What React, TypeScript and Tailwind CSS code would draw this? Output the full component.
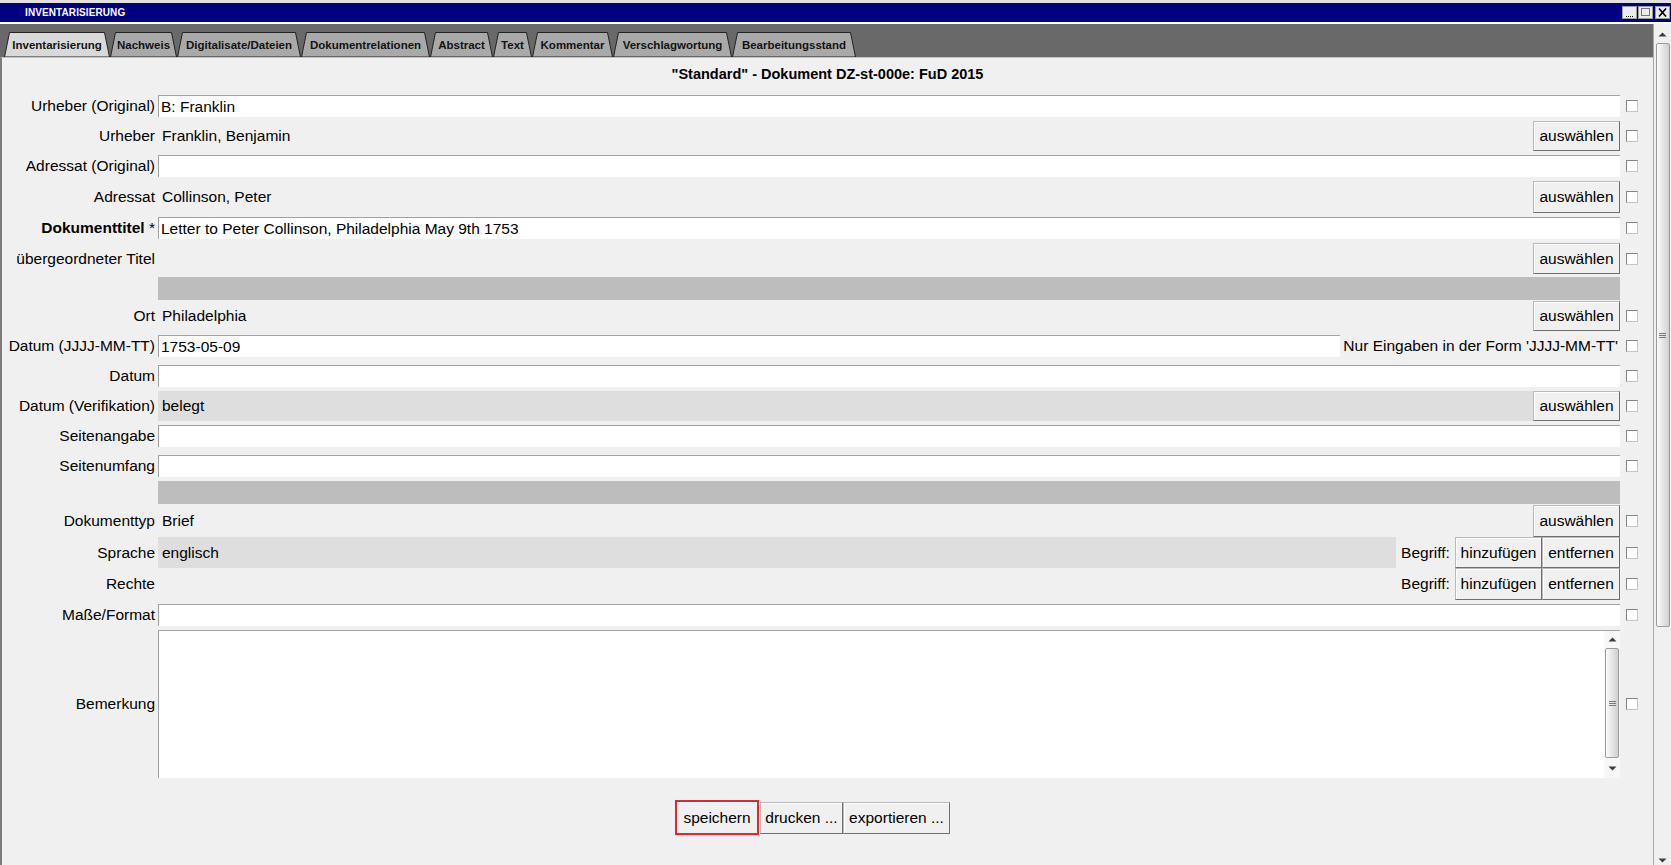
import React from 'react';

type Kids = { children?: React.ReactNode };

const Check = () => (
  <div className="w-[12px] h-[12px] bg-white border border-[#858585] border-r-[#c6c6c6] border-b-[#c6c6c6]" />
);

const Btn = ({ children, className = '' }: Kids & { className?: string }) => (
  <button
    type="button"
    className={`shrink-0 bg-[#f0f0f0] border border-[#b9b9b9] border-r-[#6f6f6f] border-b-[#6f6f6f] shadow-[inset_1px_1px_0_#ffffff] text-[15.5px] leading-none text-black flex items-center justify-center ${className}`}
  >
    {children}
  </button>
);

const Row = ({ label, children, h = 'h-[30px]' }: Kids & { label: React.ReactNode; h?: string }) => (
  <div className={`flex ${h}`}>
    <div className="w-[156px] shrink-0 flex items-center justify-end pr-[3px] whitespace-nowrap">{label}</div>
    <div className="flex-1 flex min-w-0">{children}</div>
    <div className="w-[33px] shrink-0 flex items-center pl-[6px]">
      <Check />
    </div>
  </div>
);

const Input = ({ value = '' }: { value?: string }) => (
  <div className="flex-1 h-[22px] mt-[4px] bg-white border-t border-l border-[#a3a3a3] pl-[2px] flex items-center whitespace-nowrap">
    {value}
  </div>
);

const Value = ({ text = '', shade = false }: { text?: string; shade?: boolean }) => (
  <div className={`flex-1 flex items-center pl-[4px] ${shade ? 'bg-[#dedede]' : ''}`}>{text}</div>
);

const Sep = ({ h, mt }: { h: string; mt: string }) => (
  <div className={`flex ${h}`}>
    <div className="w-[156px] shrink-0" />
    <div className={`flex-1 h-[23px] bg-[#bdbdbd] ${mt}`} />
    <div className="w-[33px] shrink-0" />
  </div>
);

const Up = () => (
  <svg width="9" height="5" viewBox="0 0 9 5">
    <path d="M0.5 4.5L4.5 0.5L8.5 4.5Z" fill="#3c3c3c" />
  </svg>
);
const Down = () => (
  <svg width="9" height="5" viewBox="0 0 9 5">
    <path d="M0.5 0.5L4.5 4.5L8.5 0.5Z" fill="#3c3c3c" />
  </svg>
);
const Grip = () => (
  <svg width="7" height="7" viewBox="0 0 7 7">
    <path d="M0 1.5h7M0 3.5h7M0 5.5h7" stroke="#7a7a7a" strokeWidth="1" />
  </svg>
);

const Thumb = ({ h }: { h: string }) => (
  <div className={`w-[14px] ${h} shrink-0 rounded-[2px] border border-[#9b9b9b] bg-gradient-to-r from-[#fbfbfb] via-[#e6e6e6] to-[#cfcfcf] flex items-center justify-center`}>
    <Grip />
  </div>
);

const tabs: { name: string; w: string; px: number; active?: boolean }[] = [
  { name: 'Inventarisierung', w: 'w-[106px]', px: 106, active: true },
  { name: 'Nachweis', w: 'w-[67px]', px: 67 },
  { name: 'Digitalisate/Dateien', w: 'w-[124px]', px: 124 },
  { name: 'Dokumentrelationen', w: 'w-[129px]', px: 129 },
  { name: 'Abstract', w: 'w-[63px]', px: 63 },
  { name: 'Text', w: 'w-[39px]', px: 39 },
  { name: 'Kommentar', w: 'w-[81px]', px: 81 },
  { name: 'Verschlagwortung', w: 'w-[119px]', px: 119 },
  { name: 'Bearbeitungsstand', w: 'w-[124px]', px: 124 },
];

export default function App() {
  return (
    <div className="w-[1671px] h-[865px] overflow-hidden flex flex-col bg-[#f0f0f0] font-['Liberation_Sans',Arial,sans-serif] text-black">
      <div className="h-[3px] bg-[#e2e2e2] shrink-0" />
      {/* title bar */}
      <div className="h-[19px] shrink-0 bg-[#000080] flex items-center">
        <span className="pl-[25px] text-[10px] font-bold text-white tracking-[0.1px]">INVENTARISIERUNG</span>
        <div className="ml-auto mr-[1px] flex items-center gap-[1px]">
          <div className="w-[15px] h-[13px] bg-[#ececec] border border-[#9a9a9a]">
            <svg width="13" height="11" viewBox="0 0 13 11">
              <path d="M3 9.5h7" stroke="#000" strokeDasharray="1 1" />
            </svg>
          </div>
          <div className="w-[15px] h-[13px] bg-[#ececec] border border-[#9a9a9a]">
            <svg width="13" height="11" viewBox="0 0 13 11">
              <rect x="2.5" y="1.5" width="8" height="7" fill="none" stroke="#000" strokeDasharray="1 1" />
            </svg>
          </div>
          <div className="w-[15px] h-[13px] ml-[1px] bg-[#ececec] border border-[#9a9a9a]">
            <svg width="13" height="11" viewBox="0 0 13 11">
              <path d="M3 1.5l7 8M10 1.5l-7 8" stroke="#000" strokeWidth="1.7" />
            </svg>
          </div>
        </div>
      </div>
      <div className="h-[2px] bg-white shrink-0" />

      <div className="flex-1 flex min-h-0">
        <div className="flex-1 flex flex-col min-w-0">
          {/* tabs */}
          <div className="h-[33px] shrink-0 bg-[#696969] flex items-end pl-[4px]">
            {tabs.map((t) => (
              <div key={t.name} className={`relative h-[25px] ${t.w} shrink-0 flex items-center justify-center`}>
                <svg className="absolute inset-0" width={t.px} height="25" viewBox={`0 0 ${t.px} 25`}>
                  <polygon
                    points={`0.5,25 5.5,0.5 ${t.px - 5.5},0.5 ${t.px - 0.5},25`}
                    fill={t.active ? '#d9d9d9' : '#a9a9a9'}
                    stroke="#222"
                    strokeWidth="1"
                  />
                </svg>
                <span className="relative text-[11.5px] font-bold text-[#141414] whitespace-nowrap pt-[3px]">{t.name}</span>
              </div>
            ))}
          </div>

          {/* panel */}
          <div className="flex-1 flex flex-col border-t border-[#c4c4c4] border-l-2 border-l-[#7c7c7c] text-[15.5px]">
            <div className="h-[33px] shrink-0 flex items-center justify-center font-bold text-[14.5px]">
              "Standard" - Dokument DZ-st-000e: FuD 2015
            </div>

            <Row label="Urheber (Original)">
              <Input value="B: Franklin" />
            </Row>
            <Row label="Urheber">
              <Value text="Franklin, Benjamin" />
              <Btn className="w-[87px] h-full">auswählen</Btn>
            </Row>
            <Row label="Adressat (Original)">
              <Input />
            </Row>
            <Row label="Adressat" h="h-[32px]">
              <Value text="Collinson, Peter" />
              <Btn className="w-[87px] h-full">auswählen</Btn>
            </Row>
            <Row
              label={
                <span>
                  <b>Dokumenttitel</b> *
                </span>
              }
            >
              <Input value="Letter to Peter Collinson, Philadelphia May 9th 1753" />
            </Row>
            <Row label="übergeordneter Titel" h="h-[31px]">
              <Value />
              <Btn className="w-[87px] h-full">auswählen</Btn>
            </Row>
            <Sep h="h-[27px]" mt="mt-[3px]" />
            <Row label="Ort">
              <Value text="Philadelphia" />
              <Btn className="w-[87px] h-full">auswählen</Btn>
            </Row>
            <Row label="Datum (JJJJ-MM-TT)">
              <Input value="1753-05-09" />
              <div className="shrink-0 flex items-center pl-[3px] pr-[2px] whitespace-nowrap">Nur Eingaben in der Form 'JJJJ-MM-TT'</div>
            </Row>
            <Row label="Datum">
              <Input />
            </Row>
            <Row label="Datum (Verifikation)">
              <Value text="belegt" shade />
              <Btn className="w-[87px] h-full">auswählen</Btn>
            </Row>
            <Row label="Seitenangabe">
              <Input />
            </Row>
            <Row label="Seitenumfang">
              <Input />
            </Row>
            <Sep h="h-[24px]" mt="mt-0" />
            <Row label="Dokumenttyp" h="h-[32px]">
              <Value text="Brief" />
              <Btn className="w-[87px] h-full">auswählen</Btn>
            </Row>
            <Row label="Sprache" h="h-[31px]">
              <Value text="englisch" shade />
              <div className="w-[59px] shrink-0 flex items-center justify-center">Begriff:</div>
              <Btn className="w-[87px] h-full">hinzufügen</Btn>
              <Btn className="w-[78px] h-full">entfernen</Btn>
            </Row>
            <Row label="Rechte" h="h-[32px]">
              <Value />
              <div className="w-[59px] shrink-0 flex items-center justify-center">Begriff:</div>
              <Btn className="w-[87px] h-full">hinzufügen</Btn>
              <Btn className="w-[78px] h-full">entfernen</Btn>
            </Row>
            <Row label="Maße/Format">
              <Input />
            </Row>
            <Row label="Bemerkung" h="h-[148px]">
              <div className="flex-1 flex bg-white border-t border-l border-[#a3a3a3]">
                <div className="flex-1" />
                <div className="w-[16px] shrink-0 flex flex-col items-center bg-[#f7f7f7]">
                  <div className="h-[17px] shrink-0 flex items-center justify-center">
                    <Up />
                  </div>
                  <Thumb h="h-[110px]" />
                  <div className="flex-1 flex items-center justify-center">
                    <Down />
                  </div>
                </div>
              </div>
            </Row>

            <div className="mt-[22px] h-[35px] flex items-center justify-center pr-[30px]">
              <Btn className="w-[84px] h-[35px] border-2 border-[#e0262e] border-r-[#e0262e] border-b-[#e0262e]">speichern</Btn>
              <Btn className="w-[83px] h-[32px] ml-[1px]">drucken ...</Btn>
              <Btn className="w-[107px] h-[32px]">exportieren ...</Btn>
            </div>
          </div>
        </div>

        {/* main scrollbar */}
        <div className="w-[18px] shrink-0 flex flex-col items-center bg-[#f0f0f0] border-l border-[#a8a8a8] pt-[2px]">
          <div className="h-[17px] shrink-0 flex items-center justify-center">
            <Up />
          </div>
          <Thumb h="h-[584px]" />
          <div className="flex-1" />
          <div className="h-[10px] shrink-0 flex items-start justify-center pt-[3px]">
            <Down />
          </div>
        </div>
      </div>
    </div>
  );
}
